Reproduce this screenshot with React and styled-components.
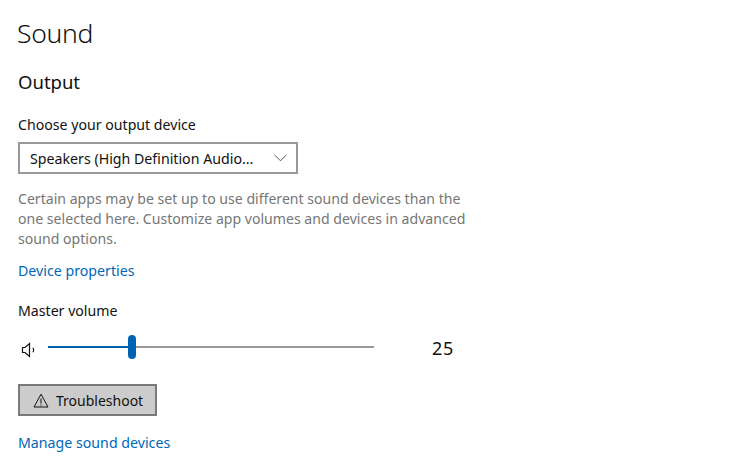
import React from "react";
import styled, { createGlobalStyle } from "styled-components";

const GlobalStyle = createGlobalStyle`
  html, body {
    margin: 0;
    padding: 0;
    background: #fff;
  }
  body {
    font-family: "Noto Sans", "Open Sans", sans-serif;
    color: #111;
  }
`;

const App = () => {
  return (
    <Page>
      <GlobalStyle />
      <PageTitle>Sound</PageTitle>
      <SectionTitle>Output</SectionTitle>
      <Label>Choose your output device</Label>
      <Select>
        <SelectText>Speakers (High Definition Audio...</SelectText>
        <svg width="13" height="8" viewBox="0 0 13 8" fill="none">
          <path d="M0.5 0.8 L6.5 6.8 L12.5 0.8" stroke="#555" strokeWidth="1" />
        </svg>
      </Select>
      <Help>
        Certain apps may be set up to use different sound devices than the
        <br />
        one selected here. Customize app volumes and devices in advanced
        <br />
        sound options.
      </Help>
      <Link $top={12}>Device properties</Link>
      <Label $top={20}>Master volume</Label>
      <VolumeRow>
        <VolumeIcon width="16" height="16" viewBox="0 0 16 16" fill="none">
          <path d="M1.5 5.5 H4 L8.5 1.5 V14.5 L4 10.5 H1.5 Z" stroke="#111" strokeWidth="1.2" />
          <path d="M12 5.8 Q13.4 8 12 10.2" stroke="#111" strokeWidth="1.2" />
        </VolumeIcon>
        <Slider>
          <Track $left={0} $width={84} $color="#0063b1" />
          <Track $left={84} $width={242} $color="#999" />
          <Thumb />
        </Slider>
        <VolumeValue>25</VolumeValue>
      </VolumeRow>
      <Button>
        <svg width="16" height="15" viewBox="0 0 16 15" fill="none">
          <path d="M8 1.2 L15 14 H1 Z" stroke="#111" strokeWidth="1" />
          <path d="M8 5.5 V10.5 M8 11.5 V12.7" stroke="#111" strokeWidth="1" />
        </svg>
        <ButtonText>Troubleshoot</ButtonText>
      </Button>
      <Link $top={17}>Manage sound devices</Link>
    </Page>
  );
};

const Page = styled.div`
  box-sizing: border-box;
  width: 747px;
  height: 466px;
  padding: 13px 0 0 18px;
  overflow: hidden;
`;

const PageTitle = styled.h1`
  margin: 0 0 0 -1px;
  font-size: 26.5px;
  line-height: 40px;
  font-weight: 300;
  letter-spacing: -0.3px;
`;

const SectionTitle = styled.h2`
  margin: 16px 0 0;
  font-size: 18.5px;
  line-height: 26px;
  font-weight: 400;
`;

const Label = styled.div`
  margin-top: ${(p) => p.$top ?? 20}px;
  font-size: 14.15px;
  line-height: 20px;
`;

const Select = styled.div`
  box-sizing: border-box;
  display: flex;
  align-items: center;
  justify-content: space-between;
  width: 280px;
  height: 32px;
  margin-top: 7px;
  padding: 0 9px 0 10px;
  border: 2px solid #999;
`;

const SelectText = styled.span`
  font-size: 14.2px;
  white-space: nowrap;
`;

const Help = styled.p`
  margin: 15px 0 0;
  font-size: 14.1px;
  line-height: 20px;
  color: #767676;
  white-space: nowrap;
`;

const Link = styled.div`
  margin-top: ${(p) => p.$top}px;
  font-size: 14.2px;
  line-height: 20px;
  color: #0067b8;
`;

const VolumeRow = styled.div`
  display: flex;
  align-items: center;
  height: 32px;
  margin-top: 10px;
  padding-left: 3px;
`;

const VolumeIcon = styled.svg`
  margin-top: 5px;
`;

const Slider = styled.div`
  position: relative;
  width: 326px;
  height: 24px;
  margin-left: 11px;
`;

const Track = styled.div`
  position: absolute;
  top: 11px;
  left: ${(p) => p.$left}px;
  width: ${(p) => p.$width}px;
  height: 2px;
  background: ${(p) => p.$color};
`;

const Thumb = styled.div`
  position: absolute;
  top: 0;
  left: 80px;
  width: 8px;
  height: 24px;
  border-radius: 4px;
  background: #0063b1;
`;

const VolumeValue = styled.span`
  margin: 2px 0 0 58px;
  font-size: 18px;
  letter-spacing: 0.7px;
`;

const Button = styled.div`
  box-sizing: border-box;
  display: flex;
  align-items: center;
  gap: 8px;
  width: 139px;
  height: 32px;
  margin-top: 21px;
  padding-left: 13px;
  border: 2px solid #7a7a7a;
  background: #ccc;
`;

const ButtonText = styled.span`
  margin-left: -1px;
  font-size: 14px;
`;

export default App;
